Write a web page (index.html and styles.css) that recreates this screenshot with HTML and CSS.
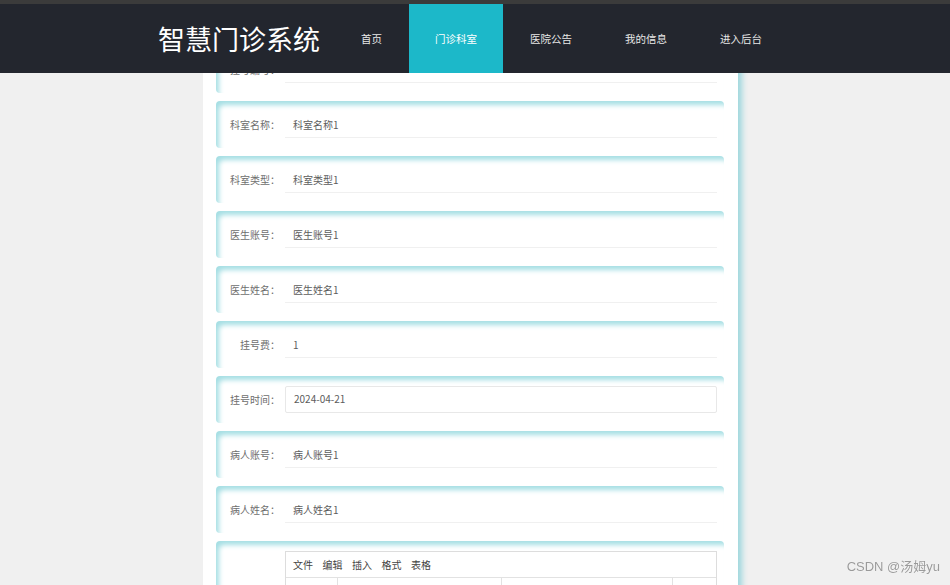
FILE: index.html
```html
<!DOCTYPE html>
<html lang="zh-CN">
<head>
<meta charset="utf-8">
<title>智慧门诊系统</title>
<link rel="stylesheet" href="styles.css">
</head>
<body>
<header class="header">
  <div class="header-inner">
    <div class="logo">智慧门诊系统</div>
    <nav class="nav">
      <a class="nav-item">首页</a>
      <a class="nav-item active">门诊科室</a>
      <a class="nav-item">医院公告</a>
      <a class="nav-item">我的信息</a>
      <a class="nav-item">进入后台</a>
    </nav>
  </div>
</header>

<main class="container">
  <div class="form-item">
    <label class="label">挂号编号：</label>
    <div class="input"></div>
  </div>
  <div class="form-item">
    <label class="label">科室名称：</label>
    <div class="input">科室名称1</div>
  </div>
  <div class="form-item">
    <label class="label">科室类型：</label>
    <div class="input">科室类型1</div>
  </div>
  <div class="form-item">
    <label class="label">医生账号：</label>
    <div class="input">医生账号1</div>
  </div>
  <div class="form-item">
    <label class="label">医生姓名：</label>
    <div class="input">医生姓名1</div>
  </div>
  <div class="form-item">
    <label class="label">挂号费：</label>
    <div class="input">1</div>
  </div>
  <div class="form-item">
    <label class="label">挂号时间：</label>
    <div class="input input-date">2024-04-21</div>
  </div>
  <div class="form-item">
    <label class="label">病人账号：</label>
    <div class="input">病人账号1</div>
  </div>
  <div class="form-item">
    <label class="label">病人姓名：</label>
    <div class="input">病人姓名1</div>
  </div>
  <div class="form-item form-item-editor">
    <label class="label"></label>
    <div class="editor">
      <div class="menubar">
        <span>文件</span><span>编辑</span><span>插入</span><span>格式</span><span>表格</span>
      </div>
      <div class="toolbar">
        <div class="tb-group g1"><span class="tb-btn">↶</span><span class="tb-btn">↷</span></div>
        <div class="tb-group g2"><span class="tb-btn">段落</span></div>
        <div class="tb-group g3"><span class="tb-btn">B</span><span class="tb-btn">I</span></div>
        <div class="tb-group g4"><span class="tb-btn">≡</span></div>
      </div>
      <div class="editor-body"></div>
    </div>
  </div>
</main>

<div class="watermark">CSDN @汤姆yu</div>
</body>
</html>
```

FILE: styles.css
```css
html, body {
  margin: 0;
  padding: 0;
  overflow: hidden;
}

body {
  background: #f0f0f0;
  font-family: "Noto Sans CJK SC", "Liberation Sans", sans-serif;
  width: 950px;
  height: 585px;
}

.header {
  position: fixed;
  top: 0;
  left: 0;
  right: 0;
  z-index: 10;
  border-top: 4px solid #3b3b3b;
  background: #23262e;
  height: 69px;
}

.header-inner {
  display: flex;
  align-items: center;
  height: 69px;
  padding-left: 158px;
}

.logo {
  color: #ffffff;
  font-size: 27px;
  line-height: 1;
  margin-right: 15px;
  white-space: nowrap;
}

.nav {
  display: flex;
  height: 69px;
  gap: 1px;
}

.nav-item {
  display: flex;
  align-items: center;
  justify-content: center;
  padding: 0 26px;
  height: 69px;
  color: #e8e8e8;
  font-size: 10.5px;
  white-space: nowrap;
}

.nav-item.active {
  background: #1cb8c9;
  color: #ffffff;
}

.container {
  width: 508px;
  margin-left: 203px;
  padding: 46px 14px 0 13px;
  background: #ffffff;
  min-height: 600px;
  box-shadow: 7px 0 6px -3px #9dd7dd;
}

.form-item {
  display: flex;
  align-items: flex-start;
  height: 47px;
  box-sizing: border-box;
  padding-top: 11px;
  margin-bottom: 8px;
  border-radius: 4px;
  background: #ffffff;
  box-shadow: inset 4px 5px 5px -1px #a6dfe4;
}

.form-item-editor {
  height: 120px;
  padding-top: 10px;
}

.label {
  width: 64px;
  flex: none;
  text-align: right;
  font-size: 10px;
  line-height: 26px;
  color: #6e6e6e;
}

.input {
  margin-left: 5px;
  width: 432px;
  height: 26px;
  box-sizing: border-box;
  padding-left: 8px;
  border-bottom: 1px solid #f0f0f0;
  font-size: 10px;
  line-height: 26px;
  color: #5c5c5c;
}

.input-date {
  border: 1px solid #e8e8e8;
  border-radius: 2px;
  line-height: 24px;
  margin-top: -1px;
  height: 27px;
}

.editor {
  margin-left: 5px;
  width: 432px;
  box-sizing: border-box;
  border: 1px solid #dddddd;
  background: #ffffff;
}

.menubar {
  display: flex;
  gap: 9.5px;
  height: 25px;
  align-items: center;
  padding-left: 7px;
  border-bottom: 1px solid #e2e2e2;
  font-size: 10px;
  color: #444444;
}

.toolbar {
  display: flex;
  height: 30px;
  border-bottom: 1px solid #e2e2e2;
}

.tb-group {
  display: flex;
  align-items: center;
  gap: 12px;
  padding-left: 6px;
  font-size: 11px;
  color: #444444;
  border-right: 1px solid #e2e2e2;
  box-sizing: border-box;
}

.g1 { width: 52px; }
.g2 { width: 164px; }
.g3 { width: 171px; }
.g4 { flex: 1; border-right: 0; }

.editor-body {
  height: 60px;
}

.watermark {
  position: fixed;
  right: 10px;
  bottom: 10px;
  font-family: "Liberation Sans", "Noto Sans CJK SC", sans-serif;
  font-size: 13px;
  color: #9a9a9a;
  text-shadow: 0 0 1px #ffffff;
}
```
